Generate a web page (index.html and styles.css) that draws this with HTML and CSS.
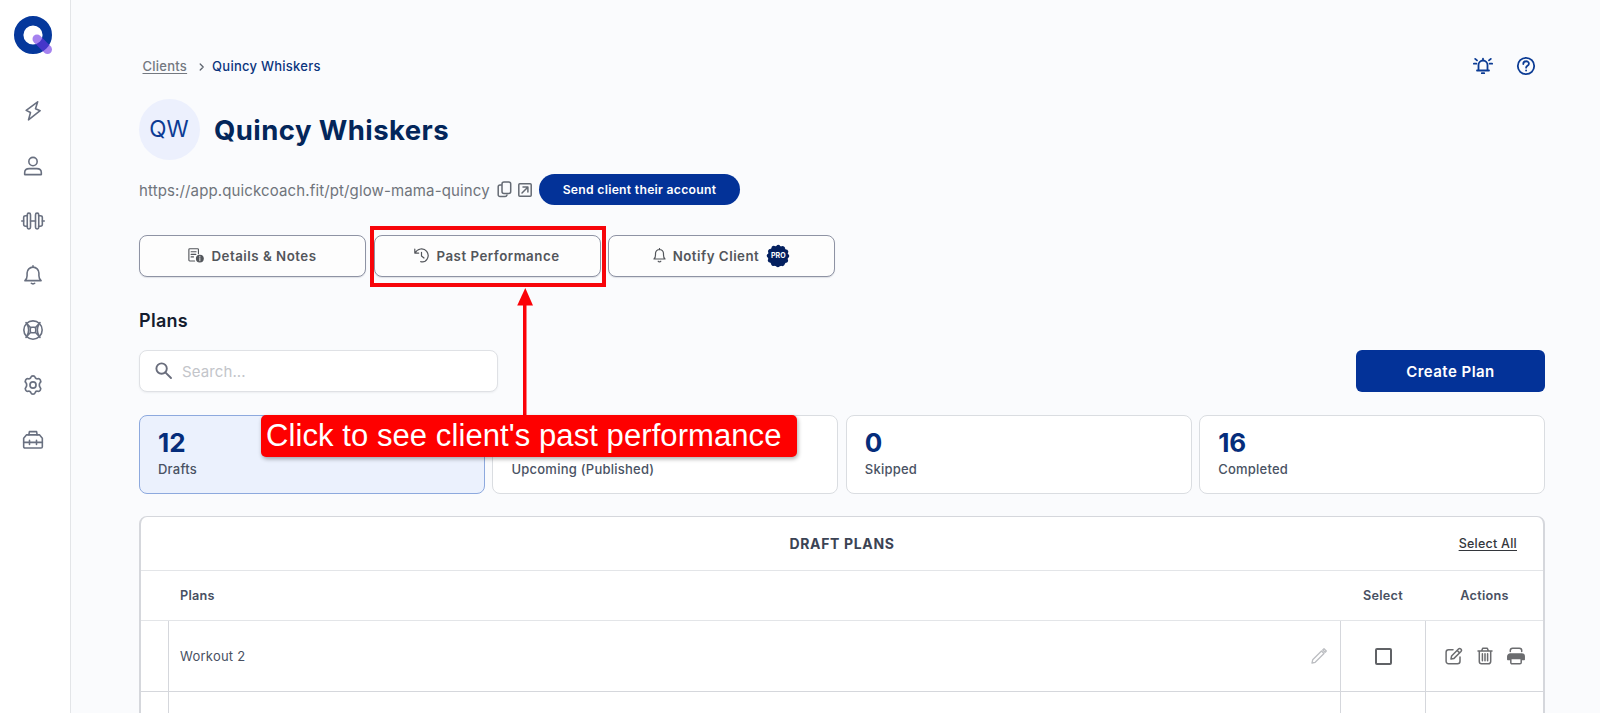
FILE: index.html
```html
<!DOCTYPE html>
<html lang="en">
<head>
<meta charset="utf-8">
<title>Quincy Whiskers</title>
<link rel="stylesheet" href="styles.css">
</head>
<body>
<div class="app">
  <nav class="sidebar">
    <svg class="logo" width="40" height="40" viewBox="0 0 40 40" fill="none"><circle cx="20" cy="20" r="14.3" stroke="#05389c" stroke-width="9.4"/><path d="M24 24L34.500 34.500" stroke="#6d35e5" stroke-opacity=".62" stroke-width="9" stroke-linecap="round"/></svg>
    <div class="nav-items">
      <svg class="icon" viewBox="0 0 24 24"><path d="M17.600 1L3.800 11.200l5.200 2.600L6.600 22.600l14-11-5.600-2.400z"/></svg>
      <svg class="icon" viewBox="0 0 24 24"><circle cx="12" cy="6.600" r="5"/><path d="M2 22.300v-2.300c0-3.200 2.500-4.900 5.500-4.900h9c3 0 5.500 1.700 5.500 4.900v2.300z"/></svg>
      <svg class="icon" viewBox="0 0 24 24"><path d="M9 12h6M-1.500 12H.8M23.200 12h2.300"/><rect x="5.100" y="2.500" width="3.900" height="19" rx="1.900"/><rect x="15" y="2.500" width="3.900" height="19" rx="1.900"/><path d="M5.300 5.700H3.300C1.800 5.700.8 6.500.8 7.700v8.600c0 1.200 1 2 2.500 2h2M18.700 5.700h2c1.500 0 2.500.8 2.500 2v8.600c0 1.200-1 2-2.500 2h-2"/></svg>
      <svg class="icon" viewBox="0 0 24 24"><path d="M2.300 18.800h19.400c-1.800-1.500-2.600-3.500-2.600-6V9.600a7.100 7.100 0 0 0-14.200 0v3.200c0 2.500-.8 4.500-2.600 6zM12 2.500V.8M10 22c.8.900 3.200.9 4 0"/></svg>
      <svg class="icon" viewBox="0 0 24 24"><circle cx="12" cy="12" r="11"/><rect x="8.700" y="8.700" width="6.600" height="6.600" rx="1.500"/><path d="M9.300 9.300C7.200 7.300 5.500 5.300 3.600 3M14.700 9.300c2.100-2 3.800-4 5.700-6.300M9.300 14.700C7.200 16.700 5.500 18.700 3.600 21M14.700 14.700c2.100 2 3.800 4 5.700 6.300M4.300 4c3 4.800 3 11.200 0 16M19.700 4c-3 4.800-3 11.200 0 16"/></svg>
      <svg class="icon gear" viewBox="0 0 24 24"><circle cx="12" cy="12" r="3.400"/><path d="M9.700 3.200c.5-2 4.100-2 4.600 0 .4 1.500 1.600 2.200 3.100 1.800 2.300-.7 4.300 2.700 2.600 4.400-1.200 1.100-1.200 4.100 0 5.200 1.700 1.700-.3 5.100-2.600 4.400-1.500-.4-2.700.3-3.100 1.800-.5 2-4.100 2-4.600 0-.4-1.500-1.600-2.200-3.100-1.800-2.300.7-4.300-2.700-2.600-4.400 1.200-1.100 1.200-4.100 0-5.200C2.300 7.700 4.300 4.300 6.600 5c1.500.4 2.700-.3 3.100-1.800z"/></svg>
      <svg class="icon" viewBox="0 0 24 24"><path d="M7 5.800L7.700 1.900h8.600l.7 3.900M.8 14.800h22.400M7.800 12.300v5M16.200 12.300v5"/><path d="M4.300 5.800h15.400L23.200 9.800V20c0 .9-.6 1.600-1.600 1.600H2.400c-1 0-1.600-.7-1.600-1.600V9.800z"/></svg>
    </div>
  </nav>

  <main class="main">
    <header class="topbar">
      <div class="crumbs"><a class="crumb-link">Clients</a><svg class="chevron" width="6" height="8" viewBox="0 0 6 8"><path d="M1.200 1l3 3-3 3"/></svg><span class="crumb-current">Quincy Whiskers</span></div>
      <div class="top-icons">
        <svg width="20" height="18" viewBox="0 0 20 18"><path d="M4 13.500h12M5.500 13.500V8a4.500 4.500 0 0 1 9 0v5.500M10 3.500V1.700M8.800 16.200h2.400M.8 6.700h2.600M16.600 6.700h2.600M2.200 1.900l1.800 1.500M17.800 1.900L16 3.400"/></svg>
        <svg width="20" height="20" viewBox="0 0 20 20"><circle cx="10" cy="10" r="8.200"/><path d="M7.300 8c0-3.700 5.600-3.500 5.600-.3 0 2-2.800 2.200-2.800 4M10.100 14.300v.3"/></svg>
      </div>
    </header>

    <div class="client">
      <div class="avatar">QW</div>
      <h1 class="client-name">Quincy Whiskers</h1>
    </div>

    <div class="link-row">
      <span class="url">https://app.quickcoach.fit/pt/glow-mama-quincy</span>
      <svg class="link-icon copy" width="15" height="17" viewBox="0 0 15 17"><rect x="5" y="1" width="8.700" height="11.500" rx="2"/><path d="M4.500 4H3a1.800 1.800 0 0 0-1.800 1.800v7.900A1.800 1.800 0 0 0 3 15.500h5a2 2 0 0 0 2-1.500"/></svg>
      <svg class="link-icon open" width="14" height="14" viewBox="0 0 14 14"><rect x=".8" y=".8" width="12.400" height="12.400" rx="1"/><path d="M4 10l5.500-5.500M5 4.100h4.900V9"/></svg>
      <button class="send">Send client their account</button>
    </div>

    <div class="tabs">
      <button class="tab"><svg width="16" height="15" viewBox="0 0 17 16"><path d="M7 13.800H1.800a.9.900 0 0 1-.9-.9V1.700c0-.5.4-.9.900-.9h8.400c.5 0 .9.400.9.900V6M3.300 4h5.300M3.300 6.800h5M3.300 9.500h2.500"/><circle class="solid" cx="12.600" cy="11.300" r="3.600"/><path class="info" d="M12.600 9v.8M12.600 11v2.600"/></svg><span class="tab-details">Details &amp; Notes</span></button>
      <button class="tab"><svg width="15" height="15" viewBox="0 0 15 15"><path d="M.8 1.200v3.900h3.900M1 5C3.300.5 9.500-.7 12.700 3.400c3.700 5-.4 11.700-6 10.300M7.500 4.300V8l2.500 2"/></svg><span class="tab-past">Past Performance</span></button>
      <button class="tab"><svg class="tab-bell" width="13" height="15" viewBox="0 0 13 15"><path d="M1 11h11c-1.200-1-1.500-2.200-1.500-4V5.500a4 4 0 0 0-8 0V7c0 1.800-.3 3-1.500 4zM6.500 1.600V.5M5.200 13.200c.5.800 2.100.8 2.600 0"/></svg><span class="tab-notify">Notify Client</span><span class="pro"><svg width="24" height="24" viewBox="0 0 24 24"><circle class="pro-disc" cx="12" cy="12" r="10.300"/><circle class="pro-scallop" cx="12" cy="12" r="9.300"/></svg><b class="pro-text">PRO</b></span></button>
    </div>

    <h2 class="section-title">Plans</h2>

    <div class="tools">
      <div class="search"><svg width="18" height="18" viewBox="0 0 18 18"><circle cx="6.600" cy="6.600" r="5.200"/><path d="M10.600 10.600l5.400 5.400"/></svg><span class="placeholder">Search...</span></div>
      <button class="create">Create Plan</button>
    </div>

    <section class="cards">
      <div class="card active"><b class="count">12</b><span class="label">Drafts</span></div>
      <div class="card"><b class="count"></b><span class="label">Upcoming (Published)</span></div>
      <div class="card"><b class="count">0</b><span class="label">Skipped</span></div>
      <div class="card"><b class="count">16</b><span class="label">Completed</span></div>
    </section>

    <section class="table">
      <div class="table-title"><span class="title-text">DRAFT PLANS</span><a class="select-all">Select All</a></div>
      <div class="row head"><span></span><span class="cell name">Plans</span><span class="cell mid">Select</span><span class="cell mid">Actions</span></div>
      <div class="row">
        <span></span>
        <div class="cell name"><span>Workout 2</span><svg class="pencil" width="16" height="16" viewBox="0 0 16 16"><path d="M1 15l.7-3.200L10.500 3l2.500 2.500-8.800 8.800zM11.700 1.900L13 .7 15.300 3l-1.200 1.300z"/></svg></div>
        <div class="cell mid"><span class="checkbox"></span></div>
        <div class="cell actions">
          <svg width="18" height="18" viewBox="0 0 18 18"><path d="M8 2.800H3.600A2.500 2.500 0 0 0 1.100 5.300v9a2.500 2.500 0 0 0 2.500 2.500h8.900a2.500 2.500 0 0 0 2.500-2.500V10M6 12l.6-3 6.900-7c1.500-1.500 4 .9 2.500 2.500l-7 6.900zM12.200 3.500l2.400 2.400"/></svg>
          <svg width="16" height="18" viewBox="0 0 16 18"><path d="M1 4h14M2.300 4v10.500a2.300 2.300 0 0 0 2.300 2.300h6.800a2.300 2.300 0 0 0 2.300-2.300V4M4.700 3.700L5.700 1.200h4.600l1 2.500M5.400 6.800v7M8 6.800v7M10.600 6.800v7"/></svg>
          <svg width="18" height="18" viewBox="0 0 18 18"><path d="M3.300 4.500V3.500c0-1.300 1-2.300 2.300-2.300h6.800c1.300 0 2.300 1 2.300 2.300v1"/><path class="solid" d="M3.300 7h11.400a2.500 2.500 0 0 1 2.500 2.500v3H.8v-3A2.500 2.500 0 0 1 3.300 7z"/><path class="paper" d="M3.800 11.500h10.400v4c0 .7-.5 1.300-1.300 1.300H5.100c-.8 0-1.300-.6-1.300-1.300z"/></svg>
        </div>
      </div>
      <div class="row"><span></span><div class="cell name"></div><div class="cell mid"></div><div class="cell actions"></div></div>
    </section>
  </main>

  <div class="highlight"></div>
  <svg class="arrow" width="18" height="130" viewBox="0 0 18 130"><path d="M9.300 0L17 17.500H1.200z"/><path d="M7 16h3.500v114H7z"/></svg>
  <div class="callout">Click to see client's past performance</div>
</div>
</body>
</html>
```
FILE: styles.css
```css
* { box-sizing: border-box; }
body { margin: 0; font-family: Inter, "Liberation Sans", sans-serif; background: #fafbfd; overflow: hidden; }
button { font-family: inherit; margin: 0; }
svg { flex: none; fill: none; stroke: currentColor; stroke-linejoin: round; stroke-linecap: round; }
.app { position: relative; display: flex; width: 1600px; height: 713px; overflow: hidden; }

.sidebar { flex: none; width: 71px; background: #fff; border-right: 1px solid #e3e5e8; padding: 15px 0 0 13px; }
.logo { display: block; }
.nav-items { display: flex; flex-direction: column; gap: 34.800px; padding: 46px 0 0 9.500px; }
.icon { width: 20px; height: 20px; color: #697080; stroke-width: 1.900; overflow: visible; }
.gear { transform: scale(1.070); }

.main { flex: 1; padding: 49px 55px 0 68px; }
.topbar { display: flex; justify-content: space-between; align-items: center; height: 33px; }
.crumbs { display: flex; align-items: center; padding-left: 3.500px; font-size: 13px; font-weight: 500; letter-spacing: .25px; }
.crumb-link { color: #737880; text-decoration: underline; text-underline-offset: 2px; padding-top: 1px; }
.chevron { margin: 2px 7.500px 0 11.500px; color: #5f6570; stroke-width: 1.300; }
.crumb-current { color: #0b347d; }
.top-icons { display: flex; align-items: center; gap: 23px; color: #0b3b94; padding-right: 9px; stroke-width: 1.800; }

.client { display: flex; align-items: center; gap: 14px; margin-top: 17px; height: 61px; }
.avatar { width: 61px; height: 61px; padding: 0 1px 2px 0; border-radius: 50%; background: #ecf0fd; color: #0b3b94; display: flex; align-items: center; justify-content: center; font-size: 22.500px; }
.client-name { margin: 0; font-size: 27.500px; font-weight: 700; letter-spacing: .43px; color: #03265a; line-height: 34px; }

.link-row { display: flex; align-items: center; height: 31px; margin-top: 14px; }
.url { width: 350px; padding-top: 1px; font-size: 15px; letter-spacing: .13px; color: #6f747b; white-space: nowrap; }
.link-icon { color: #656b74; stroke-width: 1.500; }
.copy { margin-left: 7.500px; }
.open { margin: 0 7.500px 0 6px; }
.send { width: 201px; height: 31px; padding: 0 0 1px; border: 0; border-radius: 16px; background: #033298; color: #fff; font-size: 12.200px; font-weight: 600; letter-spacing: .28px; }

.tabs { display: flex; gap: 7.500px; margin-top: 30px; }
.tab { width: 227px; height: 42px; padding: 0 0 1px; border: 1px solid #8e93a4; border-radius: 8px; background: #fdfdfd; color: #53565b; display: flex; align-items: center; justify-content: center; gap: 7px; font-size: 13.300px; font-weight: 600; letter-spacing: .5px; white-space: nowrap; box-shadow: 0 1px 1px #dfe1e6; }
.tab svg { stroke-width: 1.200; }
.solid { fill: currentColor; }
.info { stroke: #fff; stroke-width: .9; }
.pro { position: relative; width: 24px; height: 24px; display: flex; align-items: center; justify-content: center; }
.pro-disc { fill: #04205f; stroke: none; }
.pro-scallop { stroke: #04205f; stroke-width: 4px; stroke-dasharray: .01px 4.859px; }
.pro-text { position: absolute; color: #fff; font-size: 7px; font-weight: 700; letter-spacing: 0; }

.section-title { margin: 32px 0 0; font-size: 18px; line-height: 24px; font-weight: 600; letter-spacing: .3px; color: #131c2f; }
.tools { display: flex; justify-content: space-between; margin-top: 17px; }
.search { width: 359px; height: 42px; border: 1px solid #dfe1e5; border-radius: 8px; background: #fff; display: flex; align-items: center; gap: 9px; padding-left: 15px; box-shadow: 0 1px 2px #eceef1; }
.search svg { color: #696d7c; stroke-width: 1.900; }
.placeholder { color: #c3c5ca; font-size: 15px; letter-spacing: .1px; }
.create { width: 189px; height: 42px; padding: 0; border: 0; border-radius: 6px; background: #033298; color: #fff; font-size: 15px; font-weight: 600; letter-spacing: .45px; }

.cards { display: grid; grid-template-columns: repeat(4, 1fr); gap: 7.500px; margin-top: 22.500px; }
.card { height: 79.500px; border: 1px solid #dadde1; border-radius: 8px; background: #fff; padding: 10px 18px 0; display: flex; flex-direction: column; }
.active { background: #ebf1fd; border-color: #8da9de; }
.count { height: 34px; font-size: 26px; line-height: 33px; font-weight: 700; color: #052d7b; }
.label { font-size: 13px; line-height: 18px; font-weight: 500; letter-spacing: .24px; color: #495263; }

.table { margin-top: 22px; height: 240px; border: 2px solid #d5d7dc; border-top-width: 1px; border-radius: 8px; background: #fff; color: #485062; font-size: 13px; letter-spacing: .25px; }
.table-title { position: relative; display: flex; align-items: center; justify-content: center; height: 54px; border-bottom: 1px solid #e3e5e8; }
.title-text { font-size: 14px; font-weight: 700; letter-spacing: .65px; color: #3b4354; }
.select-all { position: absolute; right: 26px; color: #33363b; font-size: 12.500px; font-weight: 500; text-decoration: underline; text-underline-offset: 2px; }
.row { display: grid; grid-template-columns: 27px 1fr 85px 118px; height: 71px; border-bottom: 1px solid #d5d7dc; }
.head { height: 50px; font-size: 12.700px; font-weight: 600; border-color: #e3e5e8; }
.cell { display: flex; align-items: center; justify-content: center; border-left: 1px solid #d5d7dc; }
.head .cell { border-color: transparent; }
.name { justify-content: space-between; padding: 0 13px 0 11px; }
.pencil { color: #bcbec2; stroke-width: 1.300; }
.checkbox { width: 17px; height: 17px; border: 2px solid #606266; border-radius: 2px; }
.actions { gap: 14px; color: #6b6c6f; stroke-width: 1.500; }
.paper { fill: #fff; }

.highlight { position: absolute; left: 370px; top: 226px; width: 236px; height: 61px; border: 4px solid #f7050a; }
.arrow { position: absolute; left: 516px; top: 288px; fill: #fb0208; stroke: none; }
.callout { position: absolute; left: 261px; top: 415px; width: 536px; height: 42px; border-radius: 5px; background: #fe0000; color: #fff; font: 31px/41px "Liberation Sans", sans-serif; letter-spacing: .08px; padding-left: 5px; white-space: nowrap; box-shadow: 1px 2px 4px #0005; }
```
